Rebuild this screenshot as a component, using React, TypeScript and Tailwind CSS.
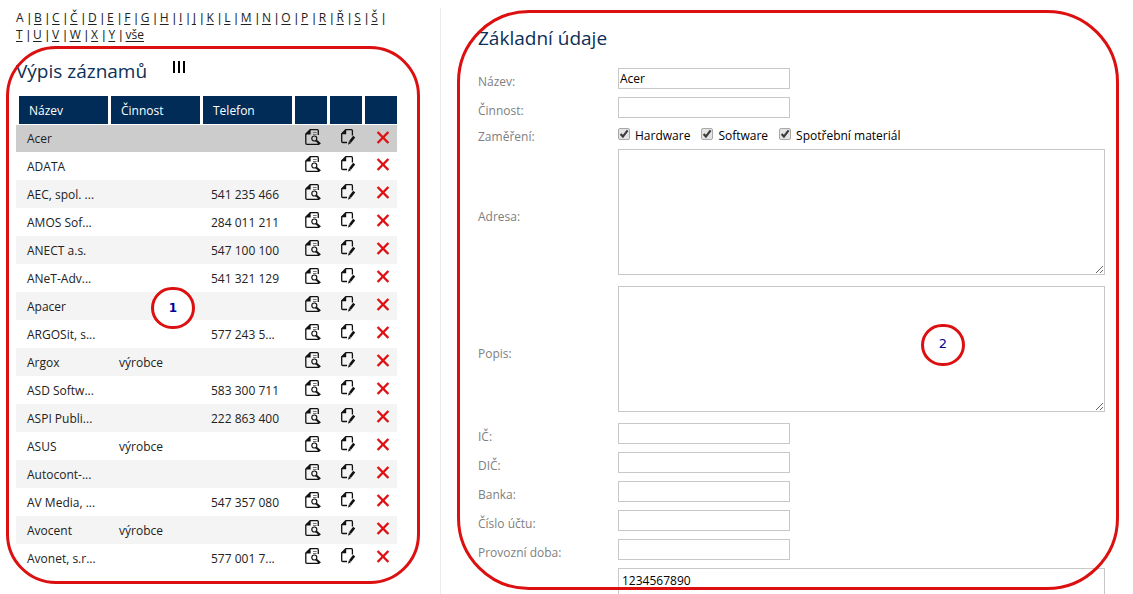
const letters = [
  'A', 'B', 'C', 'Č', 'D', 'E', 'F', 'G', 'H', 'I', 'J', 'K', 'L', 'M', 'N', 'O',
  'P', 'R', 'Ř', 'S', 'Š', 'T', 'U', 'V', 'W', 'X', 'Y', 'vše',
];

interface Company {
  name: string;
  activity?: string;
  phone?: string;
}

const companies: Company[] = [
  { name: 'Acer' },
  { name: 'ADATA' },
  { name: 'AEC, spol. ...', phone: '541 235 466' },
  { name: 'AMOS Sof...', phone: '284 011 211' },
  { name: 'ANECT a.s.', phone: '547 100 100' },
  { name: 'ANeT-Adv...', phone: '541 321 129' },
  { name: 'Apacer' },
  { name: 'ARGOSit, s...', phone: '577 243 5...' },
  { name: 'Argox', activity: 'výrobce' },
  { name: 'ASD Softw...', phone: '583 300 711' },
  { name: 'ASPI Publi...', phone: '222 863 400' },
  { name: 'ASUS', activity: 'výrobce' },
  { name: 'Autocont-...' },
  { name: 'AV Media, ...', phone: '547 357 080' },
  { name: 'Avocent', activity: 'výrobce' },
  { name: 'Avonet, s.r...', phone: '577 001 7...' },
];

function ViewIcon() {
  return (
    <svg width="17" height="17" viewBox="0 0 17 17" fill="none" stroke="#111" strokeWidth="1.3">
      <path d="M13.3 6V1.7Q13.3.7 12.3.7H5.2L.8 5V14.3Q.8 15.4 1.9 15.4H13.4V14" />
      <path d="M5.6.4V5.4H.5Z" fill="#111" stroke="none" />
      <path d="M8 3.5h3.6M8 5.5h3.6" stroke="#777" strokeWidth="1" />
      <circle cx="9.3" cy="9.5" r="2.5" strokeWidth="1.2" />
      <path d="M11.2 11.4L15.2 15" strokeWidth="2" />
    </svg>
  );
}

function EditIcon() {
  return (
    <svg width="17" height="17" viewBox="0 0 17 17" fill="none" stroke="#111" strokeWidth="1.3">
      <path d="M12.4 6.6V1.7Q12.4.7 11.4.7H5.8L1.7 4.8V12.4Q1.7 13.5 2.8 13.5H7" />
      <path d="M6.2.4V5.3H1.2Z" fill="#111" stroke="none" />
      <path d="M14.2 7.6L10 13" strokeWidth="2.6" />
      <path d="M8.8 12.4L11.2 14L8 15.8Z" fill="#111" stroke="none" />
    </svg>
  );
}

function DeleteIcon() {
  return (
    <svg width="17" height="17" viewBox="0 0 17 17" fill="none" stroke="#dd1111" strokeWidth="2.4">
      <path d="M2.6 3L13.4 14M13.4 3L2.6 14" />
    </svg>
  );
}

function RecordRow({ company, selected }: { company: Company; selected: boolean }) {
  return (
    <tr className={selected ? 'h-[27px] bg-[#cccccc]' : 'h-7 odd:bg-[#f4f4f4]'}>
      <td className="pl-[11px]">{company.name}</td>
      <td className="pl-[11px]">{company.activity}</td>
      <td className="pl-[11px]">{company.phone}</td>
      <td className="pb-[3px] pl-[13px]">
        <button type="button" aria-label="Zobrazit" className="block"><ViewIcon /></button>
      </td>
      <td className="pb-[3px] pl-[13px]">
        <button type="button" aria-label="Upravit" className="block"><EditIcon /></button>
      </td>
      <td className="pb-[3px] pl-[13px]">
        <button type="button" aria-label="Smazat" className="block"><DeleteIcon /></button>
      </td>
    </tr>
  );
}

function TextRow({ id, label, value = '' }: { id: string; label: string; value?: string }) {
  return (
    <div className="mb-2 flex h-[21px] items-center">
      <label htmlFor={id} className="w-[140px] shrink-0 pt-[6px] text-[#808080]">{label}</label>
      <input id={id} type="text" defaultValue={value} className="h-[21px] w-[172px] border border-[#c8c8c8] px-px text-black" />
    </div>
  );
}

function AreaRow({ id, label }: { id: string; label: string }) {
  return (
    <div className="mb-[11px] flex items-center">
      <label htmlFor={id} className="w-[140px] shrink-0 pt-2 text-[#808080]">{label}</label>
      <textarea id={id} className="block h-[126px] min-w-0 flex-1 border border-[#c8c8c8] px-[3px] text-black" />
    </div>
  );
}

function Check({ label }: { label: string }) {
  return (
    <label className="flex items-center gap-[5px] text-black">
      <span className="grid">
        <input
          type="checkbox"
          defaultChecked
          className="peer col-start-1 row-start-1 size-3 appearance-none rounded-xs border border-[#a8a8a8] bg-[#e4e4e4]"
        />
        <svg
          viewBox="0 0 12 12"
          className="pointer-events-none invisible col-start-1 row-start-1 size-3 peer-checked:visible"
          fill="none"
          stroke="#3c3c3c"
          strokeWidth="2.2"
        >
          <path d="M2.6 6L4.9 8.6L9.6 2.4" />
        </svg>
      </span>
      <span className="pt-[3px]">{label}</span>
    </label>
  );
}

export default function App() {
  return (
    <div className="flex h-screen overflow-hidden bg-white pt-2 font-['Open_Sans',sans-serif] text-[12px] leading-[17px] text-[#222]">
      <aside className="w-[441px] shrink-0 border-r border-[#ececec] pl-4 pr-[43px]">
        <nav className="pr-1 pt-px">
          {letters.map((letter, i) => (
            <span key={letter}>
              {i === 0 ? letter : <a href="#" className="underline underline-offset-2">{letter}</a>}
              {i < letters.length - 1 && (
                <>
                  &nbsp;<span className="ml-px font-['Liberation_Sans',sans-serif] leading-none">|</span>{' '}
                </>
              )}
            </span>
          ))}
        </nav>

        <section className="relative pt-4">
          <div className="flex h-[37px] items-start gap-[25px]">
            <h2 className="text-[19px] leading-6 text-[#0b2f57]">Výpis záznamů</h2>
            <svg width="14" height="12" viewBox="0 0 14 12" className="mt-[2px]" stroke="#000" strokeWidth="2">
              <path d="M2 0V12M7 0V12M12 0V12" />
            </svg>
          </div>

          <table className="w-full table-fixed border-separate border-spacing-0 text-left">
            <colgroup>
              <col className="w-[92px]" />
              <col className="w-[92px]" />
              <col className="w-[92px]" />
              <col />
              <col />
              <col />
            </colgroup>
            <thead>
              <tr className="h-[29px] text-white [&>th]:border-b [&>th]:border-l-3 [&>th]:border-white [&>th]:bg-[#002c57] [&>th]:bg-clip-padding [&>th]:pl-[10px] [&>th]:font-medium">
                <th>Název</th>
                <th>Činnost</th>
                <th>Telefon</th>
                <th />
                <th />
                <th />
              </tr>
            </thead>
            <tbody>
              {companies.map((company, i) => (
                <RecordRow key={company.name} company={company} selected={i === 0} />
              ))}
            </tbody>
          </table>

          <div className="pointer-events-none absolute -bottom-3 -left-[10px] -right-[23px] top-[3px] rounded-[50px] border-3 border-[#dc1010]" />
          <span className="absolute left-[135px] top-[244px] flex h-[42px] w-11 items-center justify-center rounded-full border-3 border-[#dc1010] bg-white font-['DejaVu_Sans',sans-serif] font-bold text-[#000099]">
            1
          </span>
        </section>
      </aside>

      <main className="relative min-w-0 flex-1 pl-[37px] pr-7 pt-[18px]">
        <h2 className="mb-[18px] text-[19px] leading-6 text-[#0b2f57]">Základní údaje</h2>
        <form>
          <TextRow id="nazev" label="Název:" value="Acer" />
          <TextRow id="cinnost" label="Činnost:" />
          <fieldset className="mb-2 flex h-[15px] items-center" aria-labelledby="zamereni">
            <span id="zamereni" className="w-[140px] shrink-0 pt-[6px] text-[#808080]">Zaměření:</span>
            <div className="flex gap-[11px]">
              <Check label="Hardware" />
              <Check label="Software" />
              <Check label="Spotřební materiál" />
            </div>
          </fieldset>
          <AreaRow id="adresa" label="Adresa:" />
          <AreaRow id="popis" label="Popis:" />
          <TextRow id="ic" label="IČ:" />
          <TextRow id="dic" label="DIČ:" />
          <TextRow id="banka" label="Banka:" />
          <TextRow id="ucet" label="Číslo účtu:" />
          <TextRow id="doba" label="Provozní doba:" />
          <div className="flex pl-[140px]">
            <textarea
              aria-label="Poznámka"
              defaultValue="1234567890"
              className="block h-[126px] min-w-0 flex-1 border border-[#c8c8c8] px-[3px] pt-[3px] text-black"
            />
          </div>
        </form>

        <div className="pointer-events-none absolute left-4 right-[14px] top-[2px] h-[580px] rounded-[72px] border-3 border-[#dc1010]" />
        <span className="absolute left-[480px] top-[316px] flex h-[42px] w-11 items-center justify-center rounded-full border-3 border-[#dc1010] bg-white pb-1 font-['DejaVu_Sans',sans-serif] text-[13px] text-[#000099]">
          2
        </span>
      </main>
    </div>
  );
}
